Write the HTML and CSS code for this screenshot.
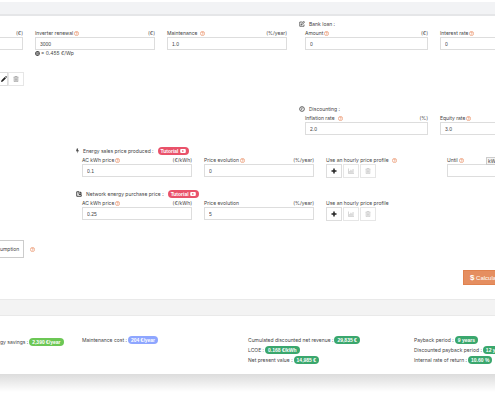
FILE: index.html
```html
<!DOCTYPE html>
<html lang="en">
<head>
    <meta charset="UTF-8">
    <meta name="viewport" content="width=device-width, initial-scale=1.0">
    <title>Financial analysis</title>
    <link rel="stylesheet" href="styles.css">
</head>
<body>
    <svg class="sprite" aria-hidden="true">
        <symbol id="help" viewBox="0 0 12 12"><circle cx="6" cy="6" r="5" fill="none" stroke="currentColor" stroke-width="1.5"/><path d="M4.2 4.6C4.2 2.6 7.9 2.7 7.8 4.7C7.7 6 6 5.8 6 7.3M6 8.2V9.5" fill="none" stroke="currentColor" stroke-width="1.6"/></symbol>
        <symbol id="edit" viewBox="0 0 12 12"><path d="M7 2H1.500V10.500H10V7M4 8L4.500 6L10 .800L11.300 2.200L6 7.500Z" fill="none" stroke="currentColor" stroke-width="1.500"/></symbol>
        <symbol id="clock" viewBox="0 0 12 12"><circle cx="6" cy="6" r="4.700" fill="none" stroke="currentColor" stroke-width="1.700"/><path d="M6 3V6.500H4" fill="none" stroke="currentColor" stroke-width="1.400"/></symbol>
        <symbol id="arrow" viewBox="0 0 12 12"><circle cx="6" cy="6" r="4.500" fill="none" stroke="currentColor" stroke-width="2.500"/><path d="M3 6H8M6 3.500L8.500 6L6 8.500" fill="none" stroke="currentColor" stroke-width="1.500"/></symbol>
        <symbol id="bolt" viewBox="0 0 7 12"><path d="M2 0H5L4 4H7L2.500 12L3.500 6.500H0Z" fill="currentColor"/></symbol>
        <symbol id="pie" viewBox="0 0 12 12"><path d="M6 1.500H1.500V10.500H10.500V7H6Z" fill="none" stroke="currentColor" stroke-width="2"/><path d="M7.500 1C10 1 11.500 3 11.500 5.500H7.500Z" fill="currentColor"/></symbol>
        <symbol id="pencil" viewBox="0 0 12 12"><path d="M0 12L1 8.500L7.500 2L10 4.500L3.500 11ZM8.300 1.300L9.500 .300Q10 0 10.500 .300L11.700 1.500Q12 2 11.700 2.500L10.700 3.700Z" fill="currentColor"/></symbol>
        <symbol id="trash" viewBox="0 0 12 12"><path d="M1 2.500H11M4 2V.800H8V2M2.300 3V11.200H9.700V3M4.500 4.500V9.500M6 4.500V9.500M7.500 4.500V9.500" fill="none" stroke="currentColor" stroke-width="1.200"/></symbol>
        <symbol id="plus" viewBox="0 0 12 12"><path d="M6 1V11M1 6H11" stroke="currentColor" stroke-width="3"/></symbol>
        <symbol id="chart" viewBox="0 0 12 12"><path d="M.700 1V10.700H12M3.500 6V9.500M5.700 3.500V9.500M7.900 5V9.500M10.100 2V9.500" fill="none" stroke="currentColor" stroke-width="1.400"/></symbol>
        <symbol id="video" viewBox="0 0 14 10"><rect width="14" height="10" rx="2.500" fill="currentColor"/><path d="M5 2.500L10 5L5 7.500Z" fill="#e9526a"/></symbol>
    </svg>

    <form class="panel">
        <div class="band"></div>
        <div class="panel-body">
            <div class="costs">
                <div class="system">
                    <div class="system-fields">
                        <div class="field cut-left">
                            <div class="label-row"><label for="inverter">&nbsp;</label><span class="unit">(€)</span></div>
                            <input type="text" id="inverter">
                        </div>
                        <div class="field">
                            <div class="label-row"><label for="renewal">Inverter renewal</label><svg class="help"><use href="#help"/></svg><span class="unit">(€)</span></div>
                            <input type="text" id="renewal" value="3000">
                            <div class="note"><svg class="icon"><use href="#arrow"/></svg> = 0.455 €/Wp</div>
                        </div>
                        <div class="field">
                            <div class="label-row spaced"><label for="maintenance">Maintenance</label><svg class="help"><use href="#help"/></svg><span class="unit">(%/year)</span></div>
                            <input type="text" id="maintenance" value="1.0">
                        </div>
                    </div>
                    <div class="actions">
                        <button type="button" class="tool tool-cut" aria-label="Edit"><svg class="icon"><use href="#pencil"/></svg></button>
                        <button type="button" class="tool muted" aria-label="Delete"><svg class="icon"><use href="#trash"/></svg></button>
                    </div>
                </div>

                <div class="finance">
                    <section>
                        <h2><svg class="icon"><use href="#edit"/></svg>Bank loan :</h2>
                        <div class="pair">
                            <div class="field">
                                <div class="label-row"><label for="amount">Amount</label><svg class="help"><use href="#help"/></svg><span class="unit">(€)</span></div>
                                <input type="text" id="amount" value="0">
                            </div>
                            <div class="field cut-right">
                                <div class="label-row"><label for="interest">Interest rate</label><svg class="help"><use href="#help"/></svg></div>
                                <input type="text" id="interest" value="0">
                            </div>
                        </div>
                    </section>
                    <section>
                        <h2><svg class="icon"><use href="#clock"/></svg>Discounting :</h2>
                        <div class="pair">
                            <div class="field">
                                <div class="label-row spaced"><label for="inflation">Inflation rate</label><svg class="help"><use href="#help"/></svg><span class="unit">(%)</span></div>
                                <input type="text" id="inflation" value="2.0">
                            </div>
                            <div class="field cut-right">
                                <div class="label-row"><label for="equity">Equity rate</label><svg class="help"><use href="#help"/></svg></div>
                                <input type="text" id="equity" value="3.0">
                            </div>
                        </div>
                    </section>
                </div>
            </div>

            <section class="price">
                <h2><svg class="icon bolt"><use href="#bolt"/></svg>Energy sales price produced : <a href="#" class="tutorial">Tutorial <svg class="video"><use href="#video"/></svg></a></h2>
                <div class="price-fields">
                    <div class="field">
                        <div class="label-row"><label for="sale">AC kWh price</label><svg class="help"><use href="#help"/></svg><span class="unit">(€/kWh)</span></div>
                        <input type="text" id="sale" value="0.1">
                    </div>
                    <div class="field">
                        <div class="label-row"><label for="sale-evolution">Price evolution</label><svg class="help"><use href="#help"/></svg><span class="unit">(%/year)</span></div>
                        <input type="text" id="sale-evolution" value="0">
                    </div>
                    <div class="profile">
                        <div class="label-row spaced"><span>Use an hourly price profile</span><svg class="help"><use href="#help"/></svg></div>
                        <div class="tools">
                            <button type="button" class="tool" aria-label="Add"><svg class="icon"><use href="#plus"/></svg></button>
                            <button type="button" class="tool muted" aria-label="Chart"><svg class="icon"><use href="#chart"/></svg></button>
                            <button type="button" class="tool muted" aria-label="Delete"><svg class="icon"><use href="#trash"/></svg></button>
                        </div>
                    </div>
                    <div class="field cut-right">
                        <div class="label-row"><label for="until">Until</label><svg class="help"><use href="#help"/></svg><button type="button" class="unit-switch">kWh</button></div>
                        <input type="text" id="until">
                    </div>
                </div>
            </section>

            <section class="price">
                <h2><svg class="icon"><use href="#pie"/></svg>Network energy purchase price : <a href="#" class="tutorial">Tutorial <svg class="video"><use href="#video"/></svg></a></h2>
                <div class="price-fields">
                    <div class="field">
                        <div class="label-row"><label for="purchase">AC kWh price</label><svg class="help"><use href="#help"/></svg><span class="unit">(€/kWh)</span></div>
                        <input type="text" id="purchase" value="0.25">
                    </div>
                    <div class="field">
                        <div class="label-row"><label for="purchase-evolution">Price evolution</label><span class="unit">(%/year)</span></div>
                        <input type="text" id="purchase-evolution" value="5">
                    </div>
                    <div class="profile">
                        <div class="label-row"><span>Use an hourly price profile</span></div>
                        <div class="tools">
                            <button type="button" class="tool" aria-label="Add"><svg class="icon"><use href="#plus"/></svg></button>
                            <button type="button" class="tool muted" aria-label="Chart"><svg class="icon"><use href="#chart"/></svg></button>
                            <button type="button" class="tool muted" aria-label="Delete"><svg class="icon"><use href="#trash"/></svg></button>
                        </div>
                    </div>
                </div>
            </section>

            <div class="consumption">
                <button type="button" class="consumption-btn">umption</button>
                <svg class="help"><use href="#help"/></svg>
            </div>
            <div class="submit">
                <button type="button" class="calculate"><b>$</b> Calculate</button>
            </div>
        </div>
    </form>

    <div class="panel">
        <div class="band band-results"></div>
        <div class="results">
            <div class="result savings">gy savings : <span class="badge green">2,390 €/year</span></div>
            <div class="result">Maintenance cost : <span class="badge blue">204 €/year</span></div>
            <div>
                <div class="result">Cumulated discounted net revenue : <span class="badge">29,835 €</span></div>
                <div class="result">LCOE : <span class="badge">0.168 €/kWh</span></div>
                <div class="result">Net present value : <span class="badge">14,985 €</span></div>
            </div>
            <div>
                <div class="result">Payback period : <span class="badge">9 years</span></div>
                <div class="result">Discounted payback period : <span class="badge">12 years</span></div>
                <div class="result">Internal rate of return : <span class="badge">10.60 %</span></div>
            </div>
        </div>
    </div>
    <div class="shade"></div>
</body>
</html>
```
FILE: styles.css
```css
* {
    box-sizing: border-box;
}
body {
    min-height: 100vh;
    margin: 0;
    padding-top: 2px;
    overflow: hidden;
    background: #fff;
    color: #444;
    font-family: Inter, "Liberation Sans", Arial, sans-serif;
    font-size: 5px;
    line-height: 7px;
    white-space: nowrap;
}
input, button {
    font: inherit;
    color: inherit;
    margin: 0;
    border-radius: 0;
}
.sprite {
    display: none;
}
.icon {
    width: 6px;
    height: 6px;
    flex: none;
}
.icon.bolt {
    width: 3px;
}
.help {
    width: 5px;
    height: 5px;
    flex: none;
    color: #e9875a;
}
.band {
    height: 14px;
    background: #f2f3f5;
    border-bottom: 2px solid #e5e6e8;
}
.panel-body {
    padding: 4px 0 14px;
}
h2 {
    display: flex;
    align-items: center;
    gap: 4px;
    height: 8px;
    margin: 0 0 2px;
    font-size: 5px;
    font-weight: normal;
}

/* fields */
.label-row {
    display: flex;
    align-items: center;
    gap: 1px;
    height: 7px;
}
.label-row.spaced {
    gap: 3px;
}
.unit {
    margin-left: auto;
}
.field {
    min-width: 0;
}
.field input {
    display: block;
    width: 100%;
    height: 13px;
    padding: 0 4px;
    border: 1px solid #ddd;
    background: #fff;
    font-family: "Liberation Sans", Arial, sans-serif;
}
.field.cut-left input {
    border-left: 0;
}
.field.cut-right input {
    border-right: 0;
}
.note {
    display: flex;
    align-items: center;
    gap: 1px;
}
.note .icon {
    width: 5px;
    height: 5px;
}

/* top part */
.costs {
    display: grid;
    grid-template-columns: 287fr 196fr;
    gap: 12px;
}
.system {
    padding-top: 10px;
}
.system-fields {
    display: grid;
    grid-template-columns: 23fr 120fr 120fr;
    gap: 12px;
}
.actions, .tools {
    display: flex;
}
.actions {
    margin-top: 15px;
}
.finance {
    display: grid;
    gap: 55px;
}
.pair {
    display: grid;
    grid-template-columns: 123fr 55fr;
    gap: 12px;
    padding-left: 6px;
}
.tool {
    display: flex;
    align-items: center;
    justify-content: center;
    width: 16px;
    height: 14px;
    padding: 0;
    border: 1px solid #ddd;
    background: #fff;
    color: #222;
}
.tool + .tool {
    margin-left: 1px;
}
.tool-cut {
    width: 8px;
    border-left: 0;
}
.tool.muted {
    color: #bbb;
    border-color: #e6e6e6;
}
.tool-cut + .tool.muted {
    margin-left: 0;
    color: #888;
}

/* prices */
.price {
    margin-top: 12px;
    padding-left: 76px;
}
.price-fields {
    display: grid;
    grid-template-columns: 110fr 110fr 109fr 48fr;
    gap: 12px;
    padding-left: 6px;
}
.tutorial {
    display: flex;
    align-items: center;
    gap: 1px;
    height: 8px;
    padding: 0 3px;
    border-radius: 4px;
    background: #e9526a;
    color: #fff;
    font-family: "Liberation Sans", Arial, sans-serif;
    font-weight: bold;
    text-decoration: none;
}
.video {
    width: 6px;
    height: 4px;
}
.unit-switch {
    width: 9px;
    height: 8px;
    margin-left: auto;
    padding: 0 1px;
    overflow: hidden;
    border: 1px solid #ccc;
    border-right: 0;
    background: #f5f5f5;
    text-align: left;
    line-height: 6px;
}

.consumption {
    display: flex;
    align-items: center;
    gap: 6px;
    margin-top: 19px;
}
.consumption-btn {
    height: 18px;
    padding: 0 4px 0 0;
    border: 1px solid #ccc;
    border-left: 0;
    background: #fff;
}
.submit {
    display: flex;
    justify-content: flex-end;
    margin-top: 12px;
}
.calculate {
    width: 32px;
    height: 15px;
    padding: 0 0 0 6px;
    overflow: hidden;
    border: 1px solid #e0824f;
    border-right: 0;
    background: #e58e60;
    color: #fff;
    font-family: "Liberation Sans", Arial, sans-serif;
    font-size: 6px;
    text-align: left;
}
.calculate b {
    font-size: 8px;
}

/* results */
.band-results {
    height: 17px;
    background: #f3f3f3;
    border-top: 1px solid #e9e9e9;
    border-bottom: 1px solid #e9e9e9;
}
.results {
    display: grid;
    grid-template-columns: 82fr 166fr 166fr 81fr;
    padding: 19px 0 9px;
}
.results > * {
    min-width: 0;
}
.result {
    display: flex;
    align-items: center;
    gap: 1px;
    height: 10px;
}
.savings {
    margin-top: 2px;
}
.badge {
    height: 8px;
    padding: 0 3px;
    border-radius: 4px;
    background: #3aa76d;
    color: #fff;
    font-family: "Liberation Sans", Arial, sans-serif;
    font-weight: bold;
    line-height: 8px;
}
.badge.green {
    background: #6cc755;
}
.badge.blue {
    background: #8ea6ff;
}
.shade {
    height: 18px;
    background: linear-gradient(#dcdcdc, #e6e6e6 30%, #fff);
}
```
